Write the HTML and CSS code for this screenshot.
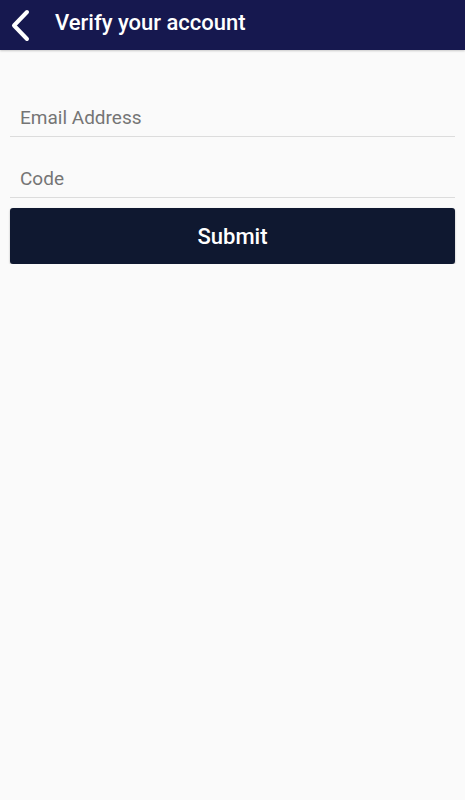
FILE: index.html
```html
<!DOCTYPE html>
<html lang="en">

<head>
    <meta charset="UTF-8">
    <meta name="viewport" content="width=device-width, initial-scale=1.0">
    <title>Verify your account</title>
    <link rel="stylesheet" href="styles.css">
</head>

<body>
    <header class="topbar">
        <a class="back" href="#">
            <svg width="24" height="34" viewBox="0 0 24 34">
                <path d="M17 4 L4 17.5 L17 31" fill="none" stroke="#fff" stroke-width="4" stroke-linecap="round" stroke-linejoin="round" />
            </svg>
        </a>
        <h1 class="title">Verify your account</h1>
    </header>
    <main class="content">
        <form class="verify-form">
            <input class="field" type="email" placeholder="Email Address">
            <input class="field" type="text" placeholder="Code">
            <button class="submit" type="button">Submit</button>
        </form>
    </main>
</body>

</html>
```

FILE: styles.css
```css
body {
    font-family: Roboto, "Liberation Sans", sans-serif;
    margin: 0;
    padding: 0;
    background-color: #fafafa;
}

.topbar {
    display: flex;
    align-items: center;
    height: 50px;
    background-color: #16184f;
    box-shadow: 0 1px 2px rgba(0, 0, 0, 0.2);
}

.back {
    display: flex;
    width: 24px;
    margin-left: 10px;
    margin-right: 21px;
}

.title {
    margin: 0;
    color: white;
    font-size: 22px;
    font-weight: 500;
    line-height: 50px;
    padding-bottom: 4px;
}

.content {
    padding: 40px 10px 0;
}

.verify-form {
    display: flex;
    flex-direction: column;
}

.field {
    box-sizing: border-box;
    height: 47px;
    padding: 16px 10px 8px;
    border: none;
    border-bottom: 1px solid #dcdcdc;
    background: transparent;
    font-family: Roboto, "Liberation Sans", sans-serif;
    font-size: 19px;
    line-height: 22px;
    color: #333;
    outline: none;
}

.field + .field {
    margin-top: 14px;
}

.field::placeholder {
    color: #757575;
}

.submit {
    margin-top: 10px;
    height: 56px;
    border: none;
    border-radius: 3px;
    background-color: #0f1830;
    color: white;
    font-family: Roboto, "Liberation Sans", sans-serif;
    font-size: 22px;
    font-weight: 500;
    box-shadow: 0 1px 2px rgba(0, 0, 0, 0.3);
}
```
